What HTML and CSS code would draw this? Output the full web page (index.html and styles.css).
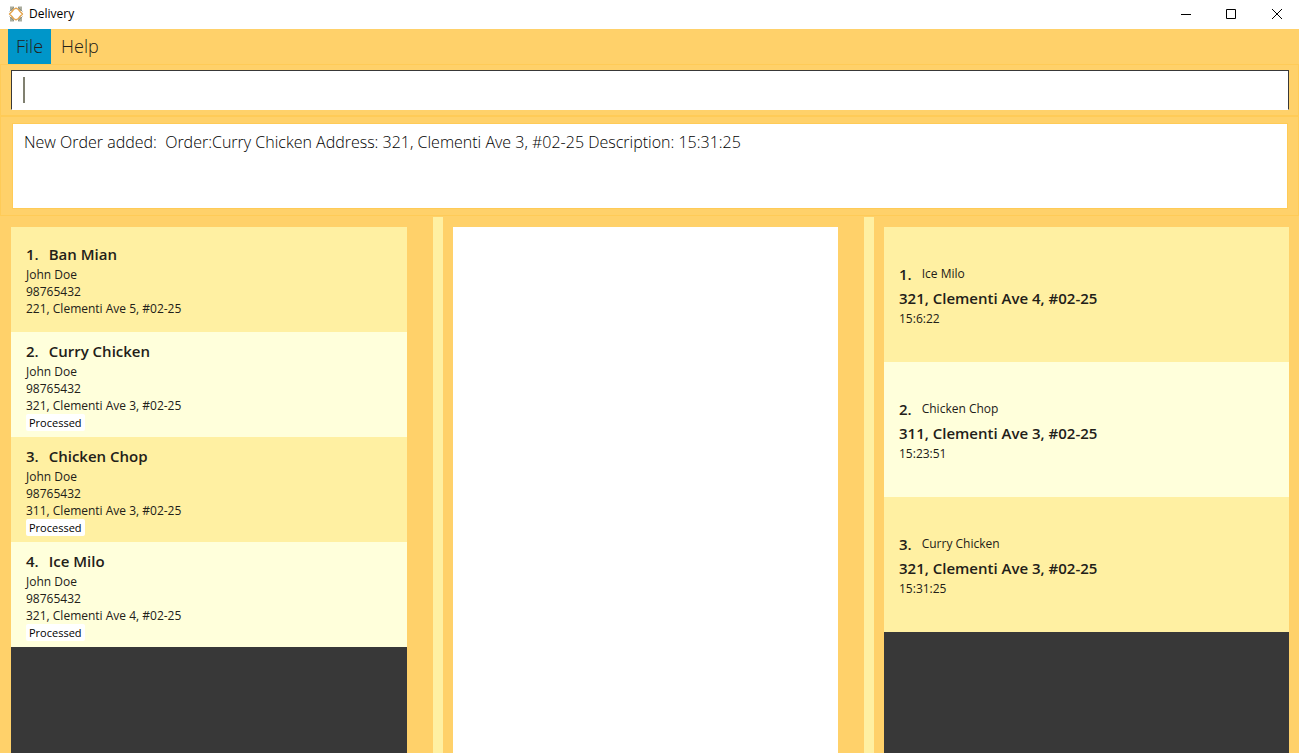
FILE: index.html
```html
<!DOCTYPE html>
<html lang="en">
<head>
<meta charset="utf-8">
<title>Delivery</title>
<link rel="stylesheet" href="styles.css">
</head>
<body>
<header class="titlebar">
  <svg class="logo" viewBox="0 0 16 16" aria-hidden="true">
    <g fill="none">
      <path d="M3 0.500V5M5 0.500V4M11 0.500V4M13 0.500V5M3 11V15.500M5 12V15.500M11 12V15.500M13 11V15.500" stroke="#a3a594" stroke-width="1.800"/>
      <path d="M1.500 5.500L4 3L6 1M14.500 5.500L12 3L10 1M1.500 10.500L4 13L6 15M14.500 10.500L12 13L10 15" stroke="#85897a" stroke-width="0.800"/>
      <path d="M5.500 3.500L8 2.200L10.500 3.500L12 5.500L14.500 8L12 10.500L10.500 12.500L8 13.800L5.500 12.500L4 10.500L1.500 8L4 5.500Z" stroke="#e3a34b" stroke-width="1.400" stroke-linejoin="round"/>
    </g>
  </svg>
  <span class="app-name">Delivery</span>
  <div class="window-buttons">
    <button aria-label="Minimize"><svg viewBox="0 0 12 12"><path d="M0 6.500h10"/></svg></button>
    <button aria-label="Maximize"><svg viewBox="0 0 12 12"><path d="M0.500 1.500h9v9h-9z"/></svg></button>
    <button aria-label="Close"><svg viewBox="0 0 12 12"><path d="M1 1l10 10M11 1L1 11"/></svg></button>
  </div>
</header>
<nav class="menubar">
  <button class="menu active">File</button>
  <button class="menu">Help</button>
</nav>
<section class="pane command-pane">
  <input class="command" type="text" aria-label="Command">
  <span class="caret"></span>
</section>
<section class="pane result-pane">
  <output class="result">New Order added:  Order:Curry Chicken Address: 321, Clementi Ave 3, #02-25 Description: 15:31:25</output>
</section>
<main class="split">
  <section class="column orders">
    <ol class="list">
      <li class="card"><h2><span>1.</span>Ban Mian</h2><p>John Doe</p><p>98765432</p><p>221, Clementi Ave 5, #02-25</p></li>
      <li class="card"><h2><span>2.</span>Curry Chicken</h2><p>John Doe</p><p>98765432</p><p>321, Clementi Ave 3, #02-25</p><span class="tag">Processed</span></li>
      <li class="card"><h2><span>3.</span>Chicken Chop</h2><p>John Doe</p><p>98765432</p><p>311, Clementi Ave 3, #02-25</p><span class="tag">Processed</span></li>
      <li class="card"><h2><span>4.</span>Ice Milo</h2><p>John Doe</p><p>98765432</p><p>321, Clementi Ave 4, #02-25</p><span class="tag">Processed</span></li>
    </ol>
  </section>
  <div class="divider"></div>
  <section class="column browser"><div class="page"></div></section>
  <div class="divider"></div>
  <section class="column tasks">
    <ol class="list">
      <li class="card task"><div class="task-name"><b>1.</b>Ice Milo</div><h2>321, Clementi Ave 4, #02-25</h2><p>15:6:22</p></li>
      <li class="card task"><div class="task-name"><b>2.</b>Chicken Chop</div><h2>311, Clementi Ave 3, #02-25</h2><p>15:23:51</p></li>
      <li class="card task"><div class="task-name"><b>3.</b>Curry Chicken</div><h2>321, Clementi Ave 3, #02-25</h2><p>15:31:25</p></li>
    </ol>
  </section>
</main>
</body>
</html>
```
FILE: styles.css
```css
* { box-sizing: border-box; }
body {
  margin: 0;
  height: 100vh;
  display: flex;
  flex-direction: column;
  overflow: hidden;
  background: #ffd16a;
  color: #222018;
  font-family: "Open Sans", "Noto Sans", sans-serif;
  font-size: 12px;
}
button { border: 0; background: none; padding: 0; font: inherit; color: inherit; }
h2, p, ol { margin: 0; padding: 0; }

.titlebar {
  flex: none;
  height: 29px;
  padding: 0 0 2px 8px;
  display: flex;
  align-items: center;
  gap: 5px;
  background: #fff;
  color: #000;
}
.logo { width: 16px; height: 16px; }
.window-buttons { margin-left: auto; display: flex; }
.window-buttons button { width: 45px; height: 27px; display: grid; place-items: center; }
.window-buttons svg { width: 12px; height: 12px; fill: none; stroke: #000; }

.menubar { flex: none; display: flex; gap: 2px; padding-left: 8px; }
.menu {
  height: 35px;
  padding: 0 8px 2px;
  font-size: 18px;
  font-weight: 300;
}
.menu.active { background: #0096c9; }

.pane { flex: none; border: 1px solid #ffcb57; }
.command-pane { position: relative; padding: 5px 9px 5px 10px; }
.command {
  display: block;
  width: 100%;
  height: 40px;
  padding: 0 12px;
  border: 1px solid #383838;
  border-bottom-color: #fff;
  border-radius: 0;
  outline: 0;
  background: #fff;
  font: inherit;
  font-size: 18px;
}
.caret { position: absolute; left: 22px; top: 12px; width: 2px; height: 26px; background: #808070; }
.result-pane { padding: 6px 10px 6px 11px; }
.result {
  display: block;
  height: 86px;
  padding: 6px 11px;
  border: 1px solid #ffcb57;
  background: #fff;
  color: #000;
  font-size: 16px;
  line-height: 24px;
  font-weight: 300;
  white-space: pre-wrap;
}

.split {
  flex: 1;
  min-height: 0;
  margin-top: 1px;
  display: grid;
  grid-template-columns: 433fr 10px 421fr 10px 425fr;
}
.column { min-width: 0; padding-top: 10px; display: flex; }
.orders { padding-left: 11px; padding-right: 26px; }
.browser { padding-left: 10px; padding-right: 26px; }
.tasks { padding-left: 10px; padding-right: 10px; }
.divider { background: #fff0a2; }
.page { flex: 1; background: #fff; }
.list { flex: 1; list-style: none; overflow: hidden; background: #383838; }
.card {
  height: 105px;
  padding: 0 15px;
  display: flex;
  flex-direction: column;
  align-items: flex-start;
  justify-content: center;
  background: #fff0a2;
}
.card:nth-child(even) { background: #ffffdb; }
.card h2 { font-size: 15px; line-height: 24px; font-weight: 600; }
.card h2 span { margin-right: 10px; }
.card p { font-size: 12px; line-height: 17px; }
.tag {
  padding: 0 3px;
  border-radius: 2px;
  background: #fff;
  color: #000;
  font-size: 11px;
  line-height: 17px;
}
.task { height: 135px; }
.task-name { display: flex; align-items: center; line-height: 24px; }
.task-name b { margin-right: 10px; font-size: 15px; font-weight: 600; }
```
